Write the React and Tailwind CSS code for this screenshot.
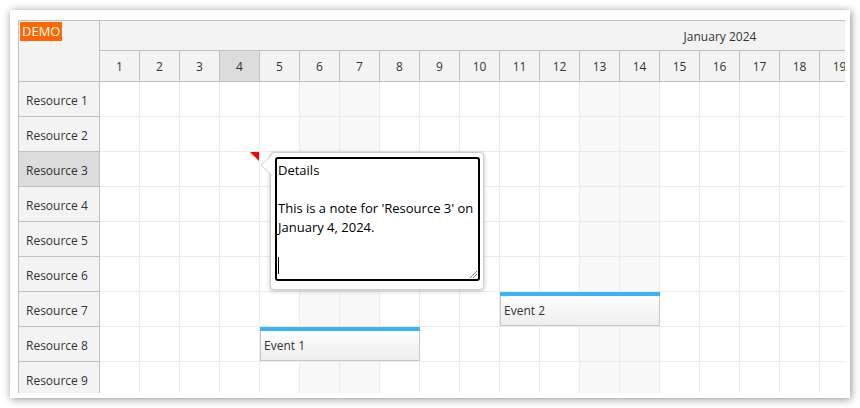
import React from "react";

const days = Array.from({ length: 19 }, (_, i) => i + 1);
const weekend = [6, 7, 13, 14];
const resources = Array.from({ length: 9 }, (_, i) => "Resource " + (i + 1));

function Event({ text, left, top }) {
  return (
    <div
      className="absolute w-[160px] h-[34px] border border-[#c8c8c8] border-t-0 bg-gradient-to-b from-white to-[#eeeeee] flex flex-col"
      style={{ left, top }}
    >
      <div className="h-[4px] bg-[#3ab4f6] -mx-px"></div>
      <div className="flex-1 flex items-center pl-[3px] text-[#333]">{text}</div>
    </div>
  );
}

export default function App() {
  return (
    <div className="w-[860px] h-[408px] bg-white pt-[10px] pl-[10px] font-['Open_Sans',sans-serif] text-[12px] text-[#333]">
      <div className="w-[840px] h-[388px] bg-white shadow-[1px_1px_8px_rgba(0,0,0,0.45)] pl-[8px] pt-[10px]">
        <div className="w-[827px] h-[373px] overflow-hidden border-t border-l border-[#c0c0c0] flex">
          {/* row headers */}
          <div className="w-[81px] shrink-0 border-r border-[#c0c0c0] bg-[#f3f3f3]">
            <div className="h-[61px] border-b border-[#c0c0c0] pt-[1px] pl-[1px]">
              <span className="inline-block bg-[#ff6600] text-white text-[13px] leading-[19px] px-[2px]">DEMO</span>
            </div>
            {resources.map((r, i) => (
              <div
                key={r}
                className={"h-[35px] border-b border-[#c0c0c0] flex items-center pl-[7px] pt-[3px] " + (i === 2 ? "bg-[#dcdcdc]" : "")}
              >
                {r}
              </div>
            ))}
          </div>

          {/* timeline */}
          <div className="flex-1 overflow-hidden">
            <div className="w-[1240px]">
              <div className="h-[30px] border-b border-[#c0c0c0] bg-[#f3f3f3] flex items-center justify-center pt-[3px]">
                January 2024
              </div>
              <div className="h-[31px] border-b border-[#c0c0c0] bg-[#f3f3f3] flex">
                {days.map((d) => (
                  <div
                    key={d}
                    className={"w-[40px] shrink-0 border-r border-[#c0c0c0] flex items-center justify-center pt-[2px] " + (d === 4 ? "bg-[#dcdcdc]" : "bg-[#f3f3f3]")}
                  >
                    {d}
                  </div>
                ))}
              </div>

              <div className="relative">
                {resources.map((r) => (
                  <div key={r} className="h-[35px] flex">
                    {days.map((d) => (
                      <div
                        key={d}
                        className={"w-[40px] shrink-0 border-r border-b border-[#ebebeb] " + (weekend.includes(d) ? "bg-[#f8f8f8]" : "bg-white")}
                      ></div>
                    ))}
                  </div>
                ))}

                <Event text="Event 2" left={400} top={210} />
                <Event text="Event 1" left={160} top={245} />

                {/* note marker */}
                <svg className="absolute left-[150px] top-[70px]" width="9" height="9" viewBox="0 0 9 9">
                  <polygon points="0,0 9,0 9,9" fill="#ff0000" />
                </svg>

                {/* bubble */}
                <div className="absolute left-[170px] top-[70px] w-[214px] h-[138px] bg-white border border-[#cfcfcf] rounded-[4px] shadow-[0_1px_4px_rgba(0,0,0,0.25)] p-[4px]">
                  <svg className="absolute left-[-11px] top-[2px]" width="12" height="22" viewBox="0 0 12 22">
                    <polygon points="11.5,0 1,10 11.5,20" fill="#ffffff" />
                    <polyline points="11.5,0.5 1,10 11.5,20" fill="none" stroke="#cfcfcf" strokeWidth="1" />
                  </svg>
                  <div className="relative w-[205px] h-[124px] border-2 border-black rounded-[3px] pl-[1px] pt-[2px] text-[13px] leading-[19px] text-black whitespace-nowrap">
                    <div>Details</div>
                    <div>&nbsp;</div>
                    <div>This is a note for 'Resource 3' on</div>
                    <div>January 4, 2024.</div>
                    <div>&nbsp;</div>
                    <div className="h-[19px] flex items-center">
                      <span className="block w-px h-[17px] bg-black"></span>
                    </div>
                    <svg className="absolute right-[1px] bottom-[1px]" width="9" height="9" viewBox="0 0 9 9">
                      <line x1="2" y1="9" x2="9" y2="2" stroke="#777" strokeWidth="1" />
                      <line x1="5" y1="9" x2="9" y2="5" stroke="#777" strokeWidth="1" />
                    </svg>
                  </div>
                </div>
              </div>
            </div>
          </div>
        </div>
      </div>
    </div>
  );
}
